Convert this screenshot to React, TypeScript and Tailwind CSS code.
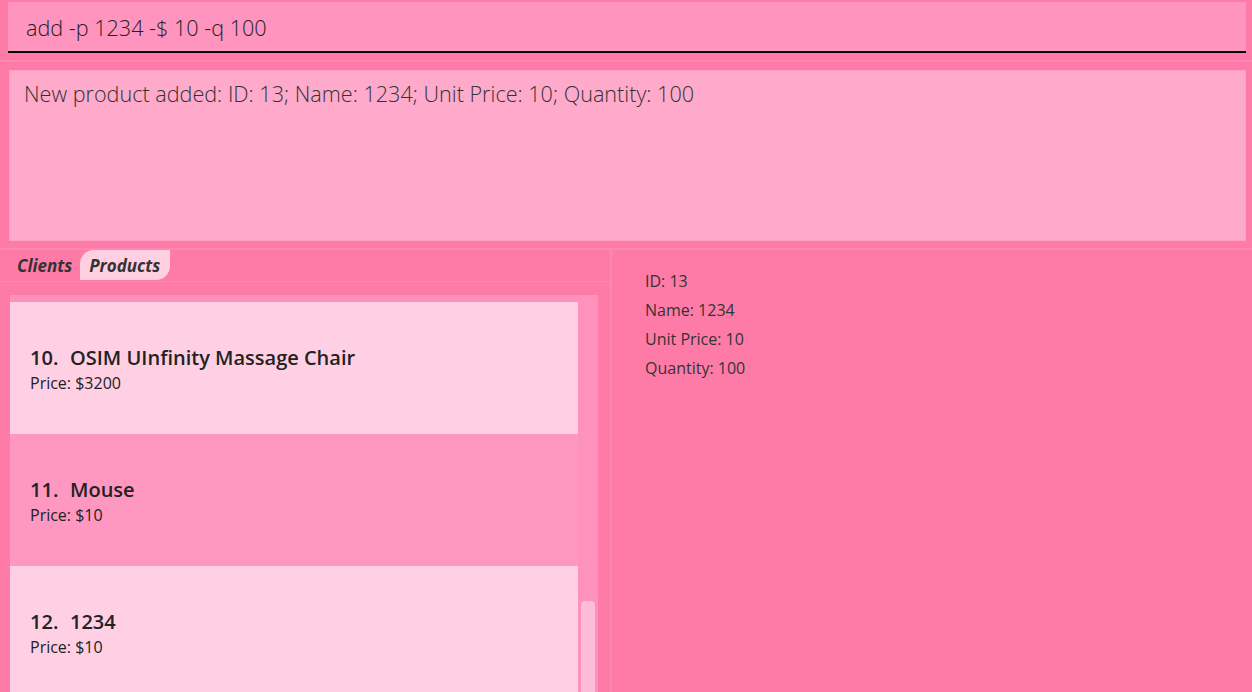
import React from 'react'

interface Product {
  id: number
  name: string
  price: number
}

const products: Product[] = [
  { id: 10, name: 'OSIM UInfinity Massage Chair', price: 3200 },
  { id: 11, name: 'Mouse', price: 10 },
  { id: 12, name: '1234', price: 10 },
]

const details = ['ID: 13', 'Name: 1234', 'Unit Price: 10', 'Quantity: 100']

const App: React.FC = () => {
  return (
    <div className="w-[1252px] h-[692px] bg-[#ff7ba7] flex flex-col overflow-hidden font-['Open_Sans',sans-serif] text-[#333]">
      {/* command box */}
      <div className="pt-[2px] pl-[8px] pr-[6px]">
        <div className="h-[51px] bg-[#ff95bf] border-b-2 border-black pl-[18px] pt-[3px] flex items-center text-[21.6px] font-light text-[#222]">
          add -p 1234 -$ 10 -q 100
        </div>
      </div>
      <div className="h-[7px]" />
      <div className="h-[2px] bg-[#ff88b2]" />

      {/* result display */}
      <div className="pt-[8px] pl-[9px] pr-[6px]">
        <div className="h-[171px] bg-[#ffaacb] border border-[#ff9fc5] pl-[14px] pt-[7px] text-[21.6px] font-light text-[#333]">
          New product added: ID: 13; Name: 1234; Unit Price: 10; Quantity: 100
        </div>
      </div>
      <div className="h-[7px]" />
      <div className="h-[2px] bg-[#ff88b2]" />

      <div className="flex flex-1 min-h-0">
        {/* left: tabs + list */}
        <div className="w-[612px] flex flex-col border-r-2 border-[#ff88b2]">
          <div className="h-[32px] flex items-start border-b border-[#ff88b2] pl-[17px] gap-[8px]">
            <span className="h-[30px] pt-[1px] flex items-center text-[17px] font-bold italic text-[#333]">Clients</span>
            <span className="h-[30px] pt-[1px] flex items-center pl-[9px] pr-[10px] bg-[#ffd0e2] rounded-tl-[14px] rounded-br-[14px] text-[17px] font-bold italic text-[#333]">
              Products
            </span>
          </div>
          <div className="flex-1 min-h-0 pt-[13px] pl-[10px] pr-[12px]">
            <div className="h-full bg-[#ff92bc] flex pt-[7px]">
              <div className="w-[568px] flex flex-col">
                {products.map((p, i) => (
                  <div
                    key={p.id}
                    className={`h-[132px] shrink-0 flex flex-col justify-center pl-[20px] pt-[4px] ${i % 2 === 0 ? 'bg-[#ffcfe3]' : 'bg-[#ff98c1]'}`}
                  >
                    <div className="text-[20px] font-semibold leading-[26px] text-[#222]">
                      <span className="inline-block w-[40px]">{p.id}.</span>
                      {p.name}
                    </div>
                    <div className="text-[16px] leading-[24px] text-[#222]">Price: ${p.price}</div>
                  </div>
                ))}
              </div>
              <div className="flex-1 flex justify-center pt-[299px]">
                <div className="w-[14px] h-[120px] bg-[#ffbcd6] rounded-[4px]" />
              </div>
            </div>
          </div>
        </div>

        {/* right: details */}
        <div className="flex-1 pl-[33px] pt-[17px]">
          {details.map(d => (
            <div key={d} className="text-[16px] leading-[29px] text-[#333]">{d}</div>
          ))}
        </div>
      </div>
    </div>
  )
}

export default App
